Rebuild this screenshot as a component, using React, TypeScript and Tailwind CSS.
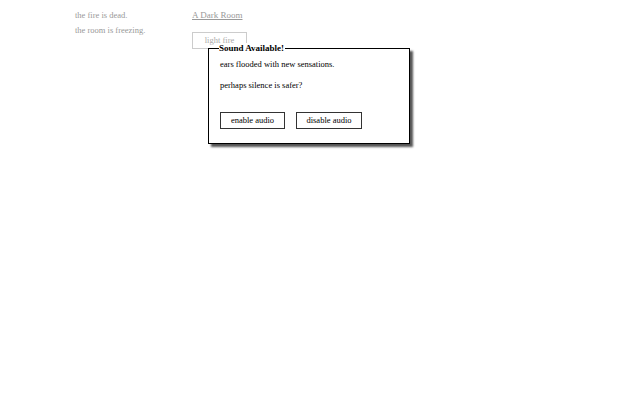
const serif = "font-['Liberation_Serif','Times_New_Roman',serif]";

function Notifications() {
  return (
    <div className="w-[192px] shrink-0 pl-[75px] pt-[10px] text-[8.5px] leading-[10px] text-[#999]">
      <div className="mb-[5px]">the fire is dead.</div>
      <div>the room is freezing.</div>
    </div>
  );
}

function Room() {
  return (
    <div className="pt-[9px]">
      <div className="text-[9px] leading-[12px] text-[#999] underline">A Dark Room</div>
      <button className="mt-[11px] w-[55px] h-[17px] border border-[#ccc] text-[8.5px] text-[#aaa] bg-white">
        light fire
      </button>
    </div>
  );
}

function SoundDialog() {
  return (
    <div className="absolute left-[208px] top-[48px] w-[202px] h-[96px] border border-black bg-white shadow-[3px_3px_2px_#555]">
      <div className="absolute left-[10px] top-[-6px] bg-white pr-[1px] text-[9px] leading-[11px] font-bold text-black">
        Sound Available!
      </div>
      <div className="pl-[11px] pt-[10px] text-[8.5px] leading-[11px] text-black">
        <p>ears flooded with new sensations.</p>
        <p className="mt-[10px]">perhaps silence is safer?</p>
        <div className="mt-[21px] flex gap-[11px]">
          <button className="w-[65px] h-[17px] border border-[#333] bg-white text-[8.5px] text-black">enable audio</button>
          <button className="w-[66px] h-[17px] border border-[#333] bg-white text-[8.5px] text-black">disable audio</button>
        </div>
      </div>
    </div>
  );
}

export default function App() {
  return (
    <div className={`relative w-[640px] h-[400px] bg-white ${serif}`}>
      <div className="flex">
        <Notifications />
        <Room />
      </div>
      <SoundDialog />
    </div>
  );
}
